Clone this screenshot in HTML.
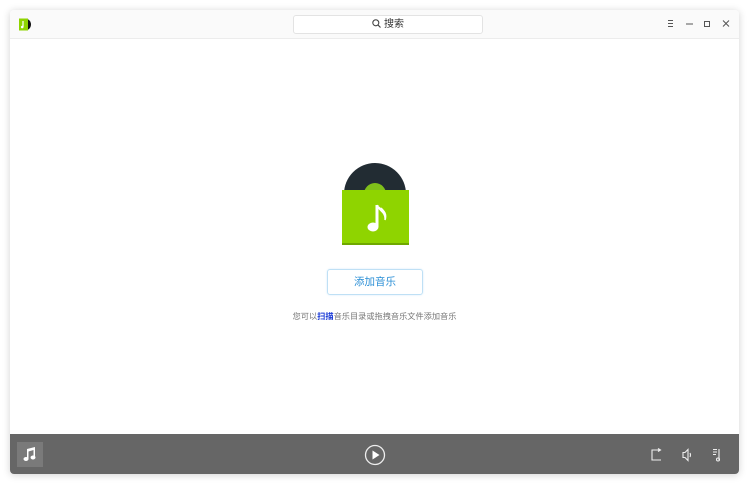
<!DOCTYPE html>
<html><head><meta charset="utf-8"><style>
body{margin:0;width:749px;height:484px;background:#fff;position:relative;overflow:hidden;font-family:"Liberation Sans","Noto Sans CJK SC",sans-serif}
.win{position:absolute;left:10px;top:10px;width:729px;height:464px;background:#fff;box-shadow:0 1px 8px rgba(0,0,0,.18);border-radius:4px;overflow:hidden}
.tb{position:absolute;left:0;top:0;width:729px;height:28px;background:#fafafa;border-bottom:1px solid #ececec}
.search{position:absolute;left:283px;top:5px;width:188px;height:17px;border:1px solid #e3e3e3;border-radius:3px;background:#fff;font-size:10px;color:#333;text-align:center;line-height:17px}
.bb{position:absolute;left:0;top:424px;width:729px;height:40px;background:#666}
.btn{position:absolute;left:317px;top:259px;width:94px;height:24px;border:1px solid #bfe0f5;border-radius:3px;font-size:10.5px;color:#2b8fd6;text-align:center;line-height:24px;box-shadow:0 0 2px #d8ecf9}
.hint{position:absolute;left:0;width:729px;top:300px;text-align:center;font-size:8.2px;color:#777}
</style></head><body>
<div class="win">
<div class="tb">
<svg style="position:absolute;left:9px;top:8px" width="14" height="13"><path d="M6 0.5a6 6 0 0 1 0 12z" fill="#111"/><rect x="0" y="0.5" width="9" height="12" fill="#8fd400"/><path d="M4 3v6" stroke="#fff" stroke-width="1.2"/><circle cx="3.2" cy="9" r="1.3" fill="#fff"/></svg>
<div class="search"><svg width="9" height="9" style="vertical-align:-1px;margin-right:3px"><circle cx="3.8" cy="3.8" r="3" stroke="#444" fill="none" stroke-width="1.1"/><path d="M6 6l2.5 2.5" stroke="#444" stroke-width="1.2"/></svg>搜索</div>
<svg style="position:absolute;left:654px;top:9px" width="70" height="10" stroke="#555" fill="none" stroke-width="1"><path d="M4 1.5h5M4 4.5h5M4 7.5h5"/><path d="M22 5h7"/><rect x="40.5" y="2.5" width="5" height="5"/><path d="M59 1.5l6 6M65 1.5l-6 6"/></svg>
</div>
<svg style="position:absolute;left:332px;top:153px" width="70" height="85">
<circle cx="33" cy="31" r="31" fill="#222c33"/><circle cx="33" cy="31" r="11" fill="#7fbf1a"/><circle cx="33" cy="31" r="3" fill="#222"/>
<rect x="0" y="27" width="67" height="55" fill="#8fd400"/><rect x="0" y="80" width="67" height="2" fill="#6fa800"/>
<path d="M35 42v22" stroke="#fff" stroke-width="3"/><ellipse cx="31" cy="64" rx="5.5" ry="4.5" fill="#fff"/><path d="M35 42c2 6 9 7 8 15c2-6-1-9-4-12" fill="#fff" stroke="#fff" stroke-width="1.5"/>
</svg>
<div class="btn">添加音乐</div>
<div class="hint">您可以<b style="color:#1a3ad6">扫描</b>音乐目录或拖拽音乐文件添加音乐</div>
<div class="bb">
<div style="position:absolute;left:7px;top:8px;width:26px;height:25px;background:#7a7a7a"></div>
<svg style="position:absolute;left:13px;top:13px" width="14" height="15" fill="#fff"><path d="M4 2l8-2v10h-1.5V3L5.5 4.5V12H4z"/><ellipse cx="3" cy="12" rx="2.5" ry="2"/><ellipse cx="10" cy="10.5" rx="2.5" ry="2"/></svg>
<svg style="position:absolute;left:354px;top:10px" width="22" height="22"><circle cx="11" cy="11" r="9.5" stroke="#eee" fill="none" stroke-width="1.3"/><path d="M8.5 6.5v9l7-4.5z" fill="#fff"/></svg>
<svg style="position:absolute;left:640px;top:14px" width="85" height="14" stroke="#eee" fill="none" stroke-width="1.1"><path d="M10 2H2v10h9M8 0.5l2.5 1.5L8 3.5"/><path d="M33 4.5h2l3-3v11l-3-3h-2zM40 5q1 2 0 4"/><path d="M63 1.5h4M63 4h4M63 6.5h3M69 1v11"/><circle cx="68" cy="11.5" r="1.5"/></svg>
</div>
</div>
</body></html>
